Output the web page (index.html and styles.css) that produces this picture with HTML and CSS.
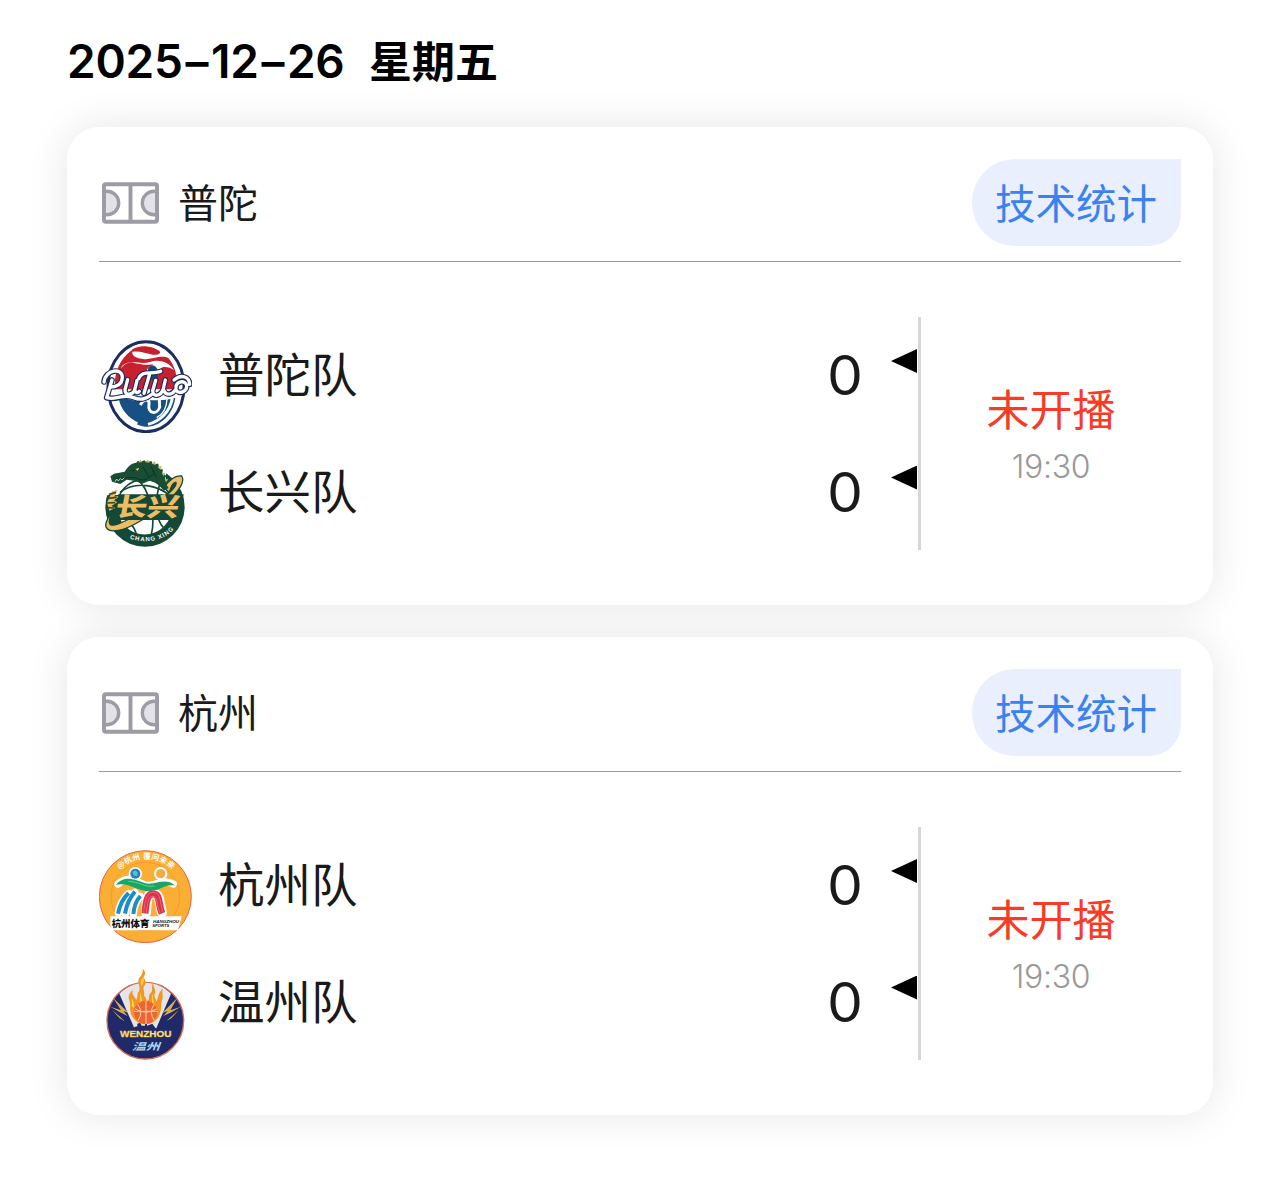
FILE: index.html
```html
<!DOCTYPE html>
<html lang="zh-CN">
<head>
	<meta charset="UTF-8">
	<title>赛程</title>
	<link rel="stylesheet" href="styles.css">
</head>
<body>
	<!-- Court icon, used in both card headers -->
	<svg class="defs" width="0" height="0">
		<symbol id="court" viewBox="0 0 58 42">
			<path d="M2 9H5A12 12 0 0 1 5 33H2ZM56 9H53A12 12 0 0 0 53 33H56Z" fill="#e3e2e8" stroke="#9c9ba6" stroke-width="3.4"/>
			<rect x="2" y="2" width="54" height="38" rx="2" fill="none" stroke="#9c9ba6" stroke-width="4"/>
			<path d="M29 2V40" stroke="#9c9ba6" stroke-width="4"/>
		</symbol>
	</svg>

	<div id="wrapper">
		<h1><span class="date">2025<i>–</i>12<i>–</i>26</span><span class="week">星期五</span></h1>

		<div class="card">
			<div class="card-head">
				<svg class="court"><use href="#court"/></svg>
				<span class="place">普陀</span>
				<a class="stats">技术统计</a>
			</div>
			<div class="match">
				<div class="teams">
					<div class="team">
						<svg class="logo" viewBox="27 30 279 279">
							<defs>
								<path id="putuo" d="M66 150L50 203M42 156C46 118 98 112 97 143C96 164 78 171 64 171M113 149L105 179C104 198 127 196 134 180L141 151M134 180C137 190 144 189 148 184M146 146C156 120 182 134 212 124M179 132L162 190M197 151L188 182C188 203 213 199 220 176L226 150M220 178C227 198 246 196 257 178M50 203C85 212 95 190 128 202C152 211 166 209 184 194M258 172C259 152 286 150 290 166C292 184 266 196 258 179M252 150C276 130 298 142 299 163"/>
							</defs>
							<ellipse cx="168" cy="170" rx="114" ry="135" fill="#fff" stroke="#1b2d63" stroke-width="9"/>
							<path d="M75 148C80 108 101 76 131 56C112 84 164 92 186 85C205 79 226 78 235 84C252 104 259 127 261 152L256 178H75Z" fill="#c8202f"/>
							<path d="M96 108C118 85 151 106 180 96C205 87 236 95 252 120C234 108 207 106 209 126C211 139 174 140 171 127C169 112 183 109 190 103C166 107 147 101 129 98C112 96 101 105 92 116Z" fill="#fff"/>
							<path d="M127 58C154 40 193 52 205 61C220 70 200 78 182 73C161 68 146 62 127 66Z" fill="#c8202f"/>
							<path d="M174 116C183 98 199 106 204 122L202 150H175Z" fill="#124b75"/>
							<path d="M79 205C106 196 132 219 158 212C185 209 220 215 256 203C248 258 208 291 166 290C121 285 87 247 79 205Z" fill="#175184"/>
							<path d="M82 207C88 239 111 268 142 281M151 225C160 207 180 205 177 222C172 253 203 255 209 231L208 210M247 204C240 245 212 273 174 283" fill="none" stroke="#fff" stroke-width="9"/>
							<path d="M231 207C230 237 215 255 200 263" fill="none" stroke="#fff" stroke-width="4"/>
							<g fill="none" stroke-linecap="round" stroke-linejoin="round">
								<use href="#putuo" stroke="#1b2d63" stroke-width="17"/>
								<use href="#putuo" stroke="#fff" stroke-width="10"/>
							</g>
						</svg>
						<span class="name">普陀队</span>
						<span class="score">0</span>
						<i class="arrow"></i>
					</div>
					<div class="team">
						<svg class="logo" viewBox="27 27 279 279">
							<circle cx="165" cy="177" r="119" fill="#144936"/>
							<path d="M26 26H228V108H120L87 141H40Z" fill="#fff"/>
							<circle cx="164" cy="178" r="84" fill="#fff" stroke="#144936" stroke-width="5"/>
							<path d="M90 133C139 96 207 112 244 147M84 218C123 181 206 181 247 209M139 94C180 119 197 211 184 259M211 104C192 155 199 219 220 238M99 207C121 221 134 240 139 257" fill="none" stroke="#144936" stroke-width="5"/>
							<path d="M221 119C239 94 259 81 275 84C292 109 238 165 151 219C99 250 60 257 49 239C43 228 54 207 66 194C48 233 59 242 105 219C191 178 270 116 257 103C250 102 243 115 238 133Z" fill="#edbd66" stroke="#144936" stroke-width="4"/>
							<path d="M67 129L84 125L73 146L91 143L72 157L82 163L64 174L76 180L58 188L51 164Z" fill="#edbd66"/>
							<path d="M57 139L78 133M53 151L80 148M50 165L76 164M51 179L72 180" stroke="#3b4b24" stroke-width="5"/>
							<path d="M61 85L72 77L104 71C112 57 126 44 139 44L144 38L153 41L163 37L170 43L184 39L189 48L205 47L207 60L219 65L217 74L229 84L225 91L234 101L228 108L236 120L222 128C207 111 195 101 178 98L157 107L136 99L110 95L91 108L66 101Z" fill="#194d34"/>
							<path d="M144 43L152 35L157 43ZM165 42L174 35L179 44ZM185 47L195 39L197 51ZM203 58L214 53L213 66ZM215 75L226 74L221 85ZM224 93L235 94L228 103Z" fill="#c9b75f"/>
							<path d="M71 89C94 95 118 84 140 91C157 102 176 92 191 77M125 69L142 64M158 56L177 87M183 55L199 88" fill="none" stroke="#0d3325" stroke-width="3"/>
							<path d="M136 63L148 59L143 69Z" fill="#dcc55a"/>
							<path d="M75 101L80 93L85 99L91 91L96 96L103 89" fill="none" stroke="#fff" stroke-width="2"/>
							<path d="M85 139H281L269 216H72Z" fill="#144936"/>
							<text class="cx-name" x="76" y="205" textLength="190" lengthAdjust="spacingAndGlyphs" transform="translate(33 0) skewX(-10)">长兴</text>
							<path id="cx-arc" d="M119 272Q207 298 259 236" fill="none"/>
							<text class="cx-sub"><textPath href="#cx-arc">CHANG XING</textPath></text>
						</svg>
						<span class="name">长兴队</span>
						<span class="score">0</span>
						<i class="arrow"></i>
					</div>
				</div>
				<div class="status">
					<div class="state">未开播</div>
					<div class="time">19:30</div>
				</div>
			</div>
		</div>

		<div class="card">
			<div class="card-head">
				<svg class="court"><use href="#court"/></svg>
				<span class="place">杭州</span>
				<a class="stats">技术统计</a>
			</div>
			<div class="match">
				<div class="teams">
					<div class="team">
						<svg class="logo" viewBox="27 30 279 279">
							<circle cx="166" cy="170" r="138" fill="#fbae34" stroke="#ee6044" stroke-width="3"/>
							<circle cx="166" cy="170" r="103" fill="none" stroke="#f58b35" stroke-width="2"/>
							<path id="hz-arc" d="M88 88Q167 23 252 91" fill="none"/>
							<text class="hz-top"><textPath href="#hz-arc" textLength="174" xml:space="preserve">@杭州 覆问未来</textPath></text>
							<g fill="none" stroke="#fff" stroke-linecap="round">
								<path d="M116 161Q92 181 85 219M135 157Q112 181 106 221M151 169Q133 188 130 221" stroke-width="22"/>
								<path d="M168 218C170 183 170 162 188 160C211 160 207 187 216 218" stroke-width="30"/>
								<path d="M84 132C116 104 139 125 166 136C195 141 218 114 250 132" stroke-width="22"/>
							</g>
							<circle cx="136" cy="101" r="20" fill="#fff"/>
							<circle cx="212" cy="101" r="20" fill="#fff"/>
							<circle cx="136" cy="101" r="15" fill="#1b83bf"/>
							<circle cx="212" cy="101" r="14" fill="#f1ab43"/>
							<path d="M127 95L136 91L144 98L140 109L130 106Z" fill="#68b4d9"/>
							<path d="M77 135C102 104 135 118 166 130C198 137 224 110 256 137C226 130 217 150 183 153C145 158 117 124 77 135Z" fill="#17a866"/>
							<path d="M115 124C145 124 163 143 194 138" fill="none" stroke="#68cc8b" stroke-width="3"/>
							<path d="M116 159Q92 181 84 221M135 155Q112 181 105 221M151 168Q133 188 130 222" fill="none" stroke="#198ecb" stroke-width="12"/>
							<path d="M165 220C168 185 172 162 188 162C212 160 203 190 216 220" fill="none" stroke="#dc3148" stroke-width="21"/>
							<path d="M161 218C164 183 170 157 188 157C214 155 208 188 220 218M169 218C172 187 177 169 188 169C202 169 199 190 210 219" fill="none" stroke="#ff9ca2" stroke-width="1.5"/>
							<path d="M61 229H275L264 271H61Z" fill="#fff"/>
							<text class="hz-name" x="65" y="261" textLength="113" lengthAdjust="spacingAndGlyphs">杭州体育</text>
							<text class="hz-sub" x="189" y="248" textLength="78" lengthAdjust="spacingAndGlyphs">HANGZHOU</text>
							<text class="hz-sub" x="187" y="262" textLength="51" lengthAdjust="spacingAndGlyphs">SPORTS</text>
						</svg>
						<span class="name">杭州队</span>
						<span class="score">0</span>
						<i class="arrow"></i>
					</div>
					<div class="team">
						<svg class="logo" viewBox="27 27 279 279">
							<circle cx="166" cy="188" r="115" fill="#202a68" stroke="#d8684e" stroke-width="4"/>
							<path d="M88 107C131 63 202 63 243 107L199 211H133Z" fill="#e4e5e6"/>
							<path d="M133 207L142 205V197L151 194L155 203H165V188H171V203L187 197L197 211V220H130Z" fill="#202a68"/>
							<path d="M128 178C115 157 124 143 118 127C112 114 119 105 128 95C124 111 134 115 138 125C145 120 140 108 146 101C153 91 145 82 145 69C145 57 160 54 158 33C170 42 164 51 161 59C167 64 169 78 161 86C158 96 165 101 162 113C169 118 167 125 173 130C180 122 174 110 183 104C191 96 181 83 190 74C187 88 200 94 194 108C190 117 199 121 198 131C207 122 201 107 219 91C214 104 221 111 217 124C211 139 217 159 205 178C187 205 146 206 128 178Z" fill="#f39425"/>
							<path d="M143 145C154 130 147 116 153 102C151 121 162 131 157 144ZM183 143C190 130 181 119 190 106C186 121 194 129 191 148ZM124 143C129 135 124 127 125 119C129 130 135 136 132 149ZM152 73C152 65 161 61 162 50C160 65 163 72 154 84Z" fill="#ffd848"/>
							<circle cx="167" cy="163" r="35" fill="#ec6635"/>
							<path d="M132 160H203M168 128V198M143 139Q161 161 144 188M193 139Q175 161 193 188M136 153Q167 172 200 153" fill="none" stroke="#ffd0a0" stroke-width="3"/>
							<path d="M69 119L116 165L100 159L113 174L90 163L61 146L93 157ZM262 119L217 165L233 159L220 174L244 163L273 146L241 157ZM66 155L104 189L89 181ZM267 155L229 189L244 181Z" fill="#d9ad55"/>
							<text class="wz-en" x="90" y="238" textLength="154" lengthAdjust="spacingAndGlyphs">WENZHOU</text>
							<text class="wz-cn" x="125" y="277" textLength="84" lengthAdjust="spacingAndGlyphs">温州</text>
						</svg>
						<span class="name">温州队</span>
						<span class="score">0</span>
						<i class="arrow"></i>
					</div>
				</div>
				<div class="status">
					<div class="state">未开播</div>
					<div class="time">19:30</div>
				</div>
			</div>
		</div>
	</div>
</body>
</html>
```

FILE: styles.css
```css
* {
	box-sizing: border-box;
}
body {
	margin: 0;
	background-color: #fff;
	color: #1a1a1a;
	font-family: "Noto Sans CJK SC", sans-serif;
}
.defs {
	display: block;
}
#wrapper {
	padding: 29px 67px 0;
}
h1 {
	display: flex;
	height: 64px;
	margin: 0 0 34px;
	color: #000;
	white-space: nowrap;
}
.date {
	width: 302px;
	font: 600 46px/64px Inter, sans-serif;
	letter-spacing: -0.2px;
}
.date i {
	margin: 0 2.7px;
	font-style: normal;
}
.week {
	font-size: 43px;
	font-weight: 700;
	line-height: 61px;
}

/* cards */
.card {
	height: 478px;
	margin-bottom: 32px;
	padding: 32px;
	border-radius: 32px;
	background-color: #fff;
	box-shadow: 0 0 40px rgba(0, 0, 0, 0.1);
}
.card-head {
	display: flex;
	height: 103px;
	border-bottom: 1px solid #999;
}
.court {
	width: 57px;
	height: 42px;
	margin: 23px 19px 0 3px;
}
.place {
	font-size: 40px;
	line-height: 84px;
}
.stats {
	width: 209px;
	height: 87px;
	margin-left: auto;
	padding-right: 1px;
	border-radius: 43px 0 32px 43px;
	background-color: #e9effc;
	color: #3b82f0;
	font-size: 40.5px;
	line-height: 85px;
	text-align: center;
}

/* match */
.match {
	display: flex;
	height: 233px;
	margin-top: 55px;
}
.teams {
	width: 822px;
	border-right: 3px solid #d6d6d6;
}
.team {
	display: flex;
	height: 116.5px;
}
.logo {
	width: 93px;
	height: 93px;
	margin: 23px 26px 0 0;
}
.name {
	font-size: 46.5px;
	line-height: 109px;
}
.score {
	width: 36px;
	margin-left: auto;
	font: 400 56px/114px Lato, sans-serif;
	text-align: center;
}
.arrow {
	width: 26px;
	height: 24px;
	margin: 32px 1px 0 28px;
	background-color: #000;
	clip-path: polygon(0 50%, 100% 0, 100% 100%);
}
.status {
	flex: 1;
	padding-top: 58px;
	text-align: center;
}
.state {
	color: #f93a26;
	font-size: 43px;
	line-height: 64px;
}
.time {
	margin-top: 4px;
	color: #999;
	font: 350 32px/48px Inter, sans-serif;
	letter-spacing: -0.3px;
}

/* logo lettering */
.cx-name {
	fill: #edbd66;
	font-size: 76px;
	font-weight: 900;
}
.cx-sub {
	fill: #fff;
	font: bold 18px "Liberation Sans", sans-serif;
	letter-spacing: 3px;
}
.hz-top {
	fill: #fff;
	font-size: 23px;
	font-weight: bold;
}
.hz-name {
	fill: #111;
	font-size: 29px;
	font-weight: 900;
}
.hz-sub {
	fill: #111;
	font: italic bold 12px "Liberation Sans", sans-serif;
}
.wz-en {
	fill: #fff2a0;
	stroke: #e9b62e;
	font: bold 26px "Liberation Sans", sans-serif;
}
.wz-cn {
	fill: #a8d9ef;
	font-size: 29px;
	font-style: italic;
	font-weight: bold;
}
```
